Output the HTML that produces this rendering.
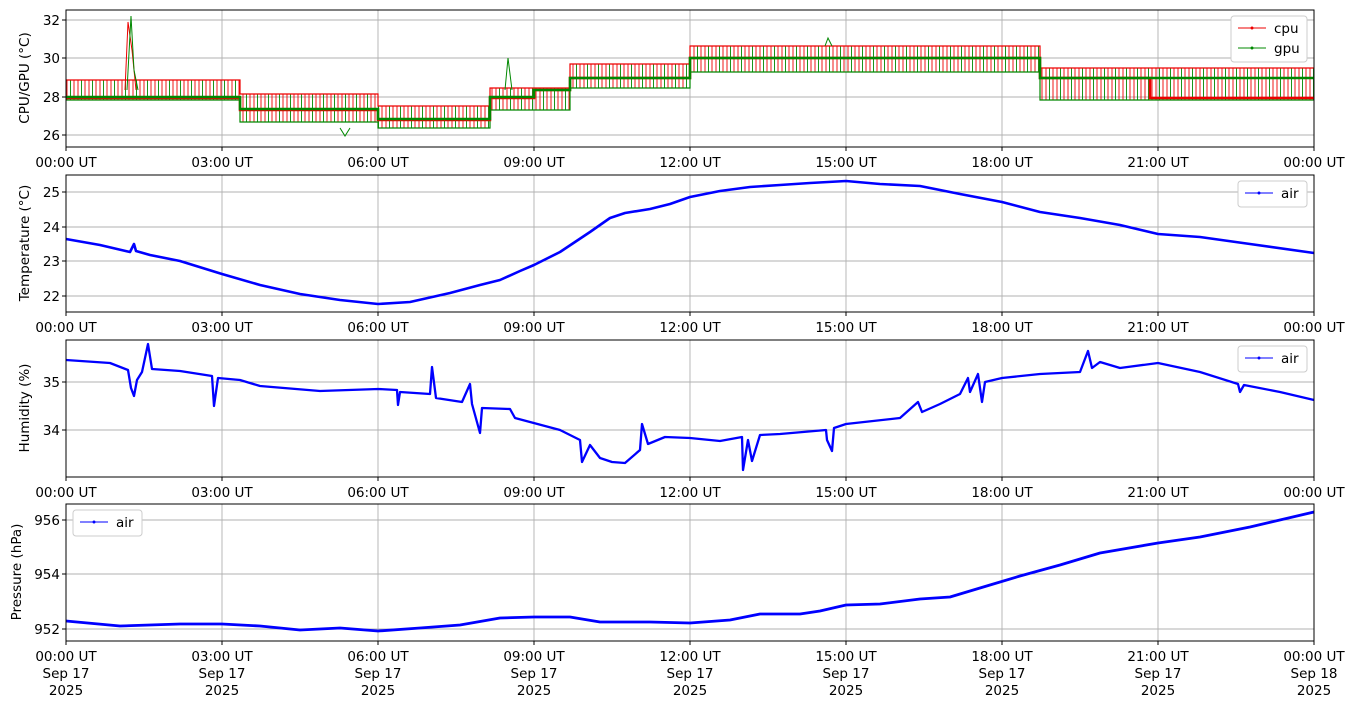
<!DOCTYPE html>
<html><head><meta charset="utf-8"><style>
html,body{margin:0;padding:0;background:#fff;}
svg{display:block;font-family:"DejaVu Sans","Liberation Sans",sans-serif;}
.t{font-size:13.5px;fill:#000;}
.g{stroke:#b0b0b0;stroke-width:0.9;}
</style></head><body>
<svg width="1355" height="707" viewBox="0 0 1355 707" xmlns="http://www.w3.org/2000/svg">
<defs>
<pattern id="nz" patternUnits="userSpaceOnUse" width="11" height="200">
<line x1="1" y1="0" x2="1" y2="200" stroke="#e00" stroke-width="0.9"/>
<line x1="4.5" y1="0" x2="4.5" y2="200" stroke="#080" stroke-width="0.9"/>
<line x1="8" y1="0" x2="8" y2="200" stroke="#e00" stroke-width="0.9"/>
</pattern>
<g id="vgrid">
<line class="g" x1="222" y1="0" x2="222" y2="137"/><line class="g" x1="378" y1="0" x2="378" y2="137"/>
<line class="g" x1="534" y1="0" x2="534" y2="137"/><line class="g" x1="690" y1="0" x2="690" y2="137"/>
<line class="g" x1="846" y1="0" x2="846" y2="137"/><line class="g" x1="1002" y1="0" x2="1002" y2="137"/>
<line class="g" x1="1158" y1="0" x2="1158" y2="137"/>
</g>
<g id="xt">
<line x1="66" y1="137" x2="66" y2="141" stroke="#000"/><line x1="222" y1="137" x2="222" y2="141" stroke="#000"/>
<line x1="378" y1="137" x2="378" y2="141" stroke="#000"/><line x1="534" y1="137" x2="534" y2="141" stroke="#000"/>
<line x1="690" y1="137" x2="690" y2="141" stroke="#000"/><line x1="846" y1="137" x2="846" y2="141" stroke="#000"/>
<line x1="1002" y1="137" x2="1002" y2="141" stroke="#000"/><line x1="1158" y1="137" x2="1158" y2="141" stroke="#000"/>
<line x1="1314" y1="137" x2="1314" y2="141" stroke="#000"/>
<g class="t" text-anchor="middle">
<text x="66" y="157">00:00 UT</text><text x="222" y="157">03:00 UT</text><text x="378" y="157">06:00 UT</text>
<text x="534" y="157">09:00 UT</text><text x="690" y="157">12:00 UT</text><text x="846" y="157">15:00 UT</text>
<text x="1002" y="157">18:00 UT</text><text x="1158" y="157">21:00 UT</text><text x="1314" y="157">00:00 UT</text>
</g>
</g>
</defs>

<!-- Panel 1 -->
<g transform="translate(0,10)">
<use href="#vgrid"/>
<line class="g" x1="66" y1="10" x2="1314" y2="10"/><line class="g" x1="66" y1="48" x2="1314" y2="48"/>
<line class="g" x1="66" y1="87" x2="1314" y2="87"/><line class="g" x1="66" y1="125" x2="1314" y2="125"/>
<g fill="url(#nz)">
<rect x="66" y="70" width="174" height="20"/>
<rect x="240" y="84" width="138" height="28"/>
<rect x="378" y="96" width="112" height="22"/>
<rect x="490" y="78" width="80" height="22"/>
<rect x="570" y="54" width="120" height="24"/>
<rect x="690" y="36" width="350" height="26"/>
<rect x="1040" y="58" width="274" height="32"/>
</g>
<g stroke-width="1.2" fill="none">
<polyline stroke="#e00" points="66,70 240,70 240,84 378,84 378,96 490,96 490,78 570,78 570,54 690,54 690,36 1040,36 1040,58 1314,58"/>
<polyline stroke="#080" points="66,90 240,90 240,112 378,112 378,118 490,118 490,100 570,100 570,78 690,78 690,62 1040,62 1040,90 1314,90"/>
</g>
<polyline fill="none" stroke="#e00" stroke-width="1" points="125,80 128,12 132,40 136,80"/>
<polyline fill="none" stroke="#080" stroke-width="1" points="127,80 131,6 134,60 138,80 M0,0"/>
<polyline fill="none" stroke="#080" stroke-width="1" points="340,118 345,126 350,118"/>
<polyline fill="none" stroke="#080" stroke-width="1" points="505,80 508,48 512,80"/>
<polyline fill="none" stroke="#080" stroke-width="1" points="825,36 828,28 832,36"/>
<g stroke-width="2.5" fill="none">
<polyline stroke="#e00" points="66,88 240,88 240,100 378,100 378,110 490,110 490,88 534,88 534,80 570,80 570,68 690,68 690,48 1040,48 1040,68 1150,68 1150,88 1314,88"/>
<polyline stroke="#080" points="66,87 240,87 240,99 378,99 378,109 490,109 490,87 534,87 534,80 570,80 570,68 690,68 690,48 1040,48 1040,68 1314,68"/>
</g>
<rect x="66" y="0" width="1248" height="137" fill="none" stroke="#000" stroke-width="1"/>
<g class="t" text-anchor="end"><text x="60" y="15">32</text><text x="60" y="53">30</text><text x="60" y="92">28</text><text x="60" y="130">26</text></g>
<g stroke="#000"><line x1="62" y1="10" x2="66" y2="10"/><line x1="62" y1="48" x2="66" y2="48"/><line x1="62" y1="87" x2="66" y2="87"/><line x1="62" y1="125" x2="66" y2="125"/></g>
<text class="t" transform="translate(29,68) rotate(-90)" text-anchor="middle">CPU/GPU (°C)</text>
<use href="#xt"/>
<rect x="1231" y="6" width="76" height="46" rx="3" fill="#fff" stroke="#ccc"/>
<line x1="1238" y1="18" x2="1266" y2="18" stroke="#e00"/><circle cx="1252" cy="18" r="1.5" fill="#e00"/>
<line x1="1238" y1="38" x2="1266" y2="38" stroke="#080"/><circle cx="1252" cy="38" r="1.5" fill="#080"/>
<text class="t" x="1274" y="23">cpu</text><text class="t" x="1274" y="43">gpu</text>
</g>

<!-- Panel 2 -->
<g transform="translate(0,175)">
<use href="#vgrid"/>
<line class="g" x1="66" y1="17" x2="1314" y2="17"/><line class="g" x1="66" y1="52" x2="1314" y2="52"/>
<line class="g" x1="66" y1="86" x2="1314" y2="86"/><line class="g" x1="66" y1="121" x2="1314" y2="121"/>
<polyline fill="none" stroke="#00f" stroke-width="2.6" stroke-linejoin="round" points="66,64 100,70 130,77 132,73 134,69 136,76 150,80 180,86 222,99 260,110 300,119 340,125 378,129 410,127 450,118 480,110 500,105 520,96 534,90 560,77 590,57 610,43 625,38 650,34 670,29 690,22 720,16 750,12 780,10 810,8 846,6 880,9 920,11 960,19 1002,27 1040,37 1080,43 1120,50 1158,59 1200,62 1250,69 1314,78"/>
<rect x="66" y="0" width="1248" height="137" fill="none" stroke="#000"/>
<g class="t" text-anchor="end"><text x="60" y="22">25</text><text x="60" y="57">24</text><text x="60" y="91">23</text><text x="60" y="126">22</text></g>
<g stroke="#000"><line x1="62" y1="17" x2="66" y2="17"/><line x1="62" y1="52" x2="66" y2="52"/><line x1="62" y1="86" x2="66" y2="86"/><line x1="62" y1="121" x2="66" y2="121"/></g>
<text class="t" transform="translate(29,68) rotate(-90)" text-anchor="middle">Temperature (°C)</text>
<use href="#xt"/>
<rect x="1238" y="6" width="69" height="26" rx="3" fill="#fff" stroke="#ccc"/>
<line x1="1245" y1="18" x2="1273" y2="18" stroke="#00f"/><circle cx="1259" cy="18" r="1.5" fill="#00f"/>
<text class="t" x="1281" y="23">air</text>
</g>

<!-- Panel 3 -->
<g transform="translate(0,340)">
<use href="#vgrid"/>
<line class="g" x1="66" y1="42" x2="1314" y2="42"/><line class="g" x1="66" y1="90" x2="1314" y2="90"/>
<polyline fill="none" stroke="#00f" stroke-width="2.3" stroke-linejoin="round" points="66,20 110,23 128,30 131,48 134,56 137,40 142,32 148,4 152,29 180,31 212,36 214,66 218,38 240,40 260,46 320,51 378,49 397,50 398,65 400,52 430,54 432,27 436,58 462,62 470,44 472,64 480,93 482,68 510,69 515,78 560,90 580,100 582,122 590,105 600,118 612,122 625,123 640,110 642,84 648,104 665,97 690,98 720,101 742,97 743,130 748,100 752,121 760,95 780,94 826,90 827,100 832,111 834,88 846,84 900,78 918,62 922,72 940,64 960,54 968,38 970,52 978,34 982,62 985,42 1002,38 1040,34 1080,32 1088,11 1092,28 1100,22 1120,28 1158,23 1200,32 1238,44 1240,52 1244,45 1280,52 1314,60"/>
<rect x="66" y="0" width="1248" height="137" fill="none" stroke="#000"/>
<g class="t" text-anchor="end"><text x="60" y="47">35</text><text x="60" y="95">34</text></g>
<g stroke="#000"><line x1="62" y1="42" x2="66" y2="42"/><line x1="62" y1="90" x2="66" y2="90"/></g>
<text class="t" transform="translate(29,68) rotate(-90)" text-anchor="middle">Humidity (%)</text>
<use href="#xt"/>
<rect x="1238" y="6" width="69" height="26" rx="3" fill="#fff" stroke="#ccc"/>
<line x1="1245" y1="18" x2="1273" y2="18" stroke="#00f"/><circle cx="1259" cy="18" r="1.5" fill="#00f"/>
<text class="t" x="1281" y="23">air</text>
</g>

<!-- Panel 4 -->
<g transform="translate(0,504)">
<use href="#vgrid"/>
<line class="g" x1="66" y1="16" x2="1314" y2="16"/><line class="g" x1="66" y1="70" x2="1314" y2="70"/>
<line class="g" x1="66" y1="125" x2="1314" y2="125"/>
<polyline fill="none" stroke="#00f" stroke-width="2.8" stroke-linejoin="round" points="66,117 120,122 180,120 222,120 260,122 300,126 340,124 378,127 420,124 460,121 500,114 534,113 570,113 600,118 650,118 690,119 730,116 760,110 800,110 820,107 846,101 880,100 920,95 950,93 990,81 1020,72 1060,61 1100,49 1158,39 1200,33 1250,23 1314,8"/>
<rect x="66" y="0" width="1248" height="137" fill="none" stroke="#000"/>
<g class="t" text-anchor="end"><text x="60" y="21">956</text><text x="60" y="75">954</text><text x="60" y="130">952</text></g>
<g stroke="#000"><line x1="62" y1="16" x2="66" y2="16"/><line x1="62" y1="70" x2="66" y2="70"/><line x1="62" y1="125" x2="66" y2="125"/></g>
<text class="t" transform="translate(21,68) rotate(-90)" text-anchor="middle">Pressure (hPa)</text>
<use href="#xt"/>
<g class="t" text-anchor="middle">
<text x="66" y="174">Sep 17</text><text x="66" y="191">2025</text>
<text x="222" y="174">Sep 17</text><text x="222" y="191">2025</text>
<text x="378" y="174">Sep 17</text><text x="378" y="191">2025</text>
<text x="534" y="174">Sep 17</text><text x="534" y="191">2025</text>
<text x="690" y="174">Sep 17</text><text x="690" y="191">2025</text>
<text x="846" y="174">Sep 17</text><text x="846" y="191">2025</text>
<text x="1002" y="174">Sep 17</text><text x="1002" y="191">2025</text>
<text x="1158" y="174">Sep 17</text><text x="1158" y="191">2025</text>
<text x="1314" y="174">Sep 18</text><text x="1314" y="191">2025</text>
</g>
<rect x="73" y="6" width="69" height="26" rx="3" fill="#fff" stroke="#ccc"/>
<line x1="80" y1="18" x2="108" y2="18" stroke="#00f"/><circle cx="94" cy="18" r="1.5" fill="#00f"/>
<text class="t" x="116" y="23">air</text>
</g>
</svg>
</body></html>
